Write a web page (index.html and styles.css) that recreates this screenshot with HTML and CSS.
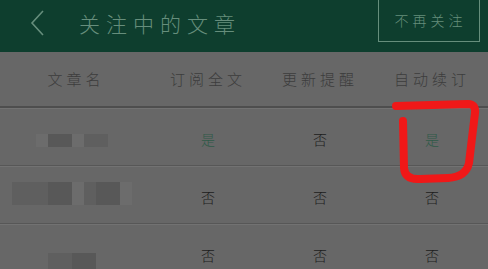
FILE: index.html
```html
<!DOCTYPE html>
<html lang="zh-CN">
<head>
    <meta charset="UTF-8">
    <meta name="viewport" content="width=device-width, initial-scale=1.0">
    <title>关注中的文章</title>
    <link rel="stylesheet" href="styles.css">
</head>
<body>
    <div class="topbar">
        <span class="back">
            <svg width="16" height="28" viewBox="0 0 16 28"><path d="M14 2 L3 14 L14 26" fill="none" stroke="#668e7c" stroke-width="1.6"/></svg>
        </span>
        <span class="title">关注中的文章</span>
        <span class="unfollow">不再关注</span>
    </div>

    <div class="table">
        <div class="row head">
            <div class="cell">文章名</div>
            <div class="cell">订阅全文</div>
            <div class="cell">更新提醒</div>
            <div class="cell">自动续订</div>
        </div>
        <div class="row">
            <div class="cell name">
                <div class="blur b1">
                    <i class="p0"></i><i class="p2"></i><i class="p2"></i><i class="p0"></i><i class="p1"></i><i class="p1"></i>
                </div>
            </div>
            <div class="cell yes">是</div>
            <div class="cell">否</div>
            <div class="cell yes">是</div>
        </div>
        <div class="row">
            <div class="cell name">
                <div class="blur b2">
                    <i class="p1"></i><i class="p1"></i><i class="p1"></i><i class="p2"></i><i class="p2"></i><i class="p0"></i><i class="p1"></i><i class="p2"></i><i class="p2"></i><i class="p0"></i>
                </div>
            </div>
            <div class="cell">否</div>
            <div class="cell">否</div>
            <div class="cell">否</div>
        </div>
        <div class="row">
            <div class="cell name">
                <div class="blur b3">
                    <i class="p1"></i><i class="p1"></i><i class="p2"></i><i class="p2"></i>
                </div>
            </div>
            <div class="cell">否</div>
            <div class="cell">否</div>
            <div class="cell">否</div>
        </div>
    </div>

    <svg class="mark" width="488" height="269" viewBox="0 0 488 269">
        <path d="M396 106 L468 104 Q476 104 475 113 L469 163 Q466 177 448 178 L420 179 Q405 180 404 168 L403 121" fill="none" stroke="#f01818" stroke-width="8" stroke-linecap="round" stroke-linejoin="round"/>
    </svg>
</body>
</html>
```

FILE: styles.css
```css
body {
    margin: 0;
    width: 488px;
    height: 269px;
    overflow: hidden;
    background: #676767;
    font-family: "Noto Sans CJK SC", "Noto Sans", sans-serif;
    font-weight: 300;
    position: relative;
}
.topbar {
    height: 52px;
    background: #0e3e2e;
    display: flex;
    align-items: center;
    color: #668e7c;
}
.back {
    display: flex;
    margin-left: 29px;
    margin-top: -6px;
}
.title {
    margin-left: 34px;
    margin-top: -6px;
    font-size: 21px;
    letter-spacing: 6px;
}
.unfollow {
    margin-left: auto;
    margin-right: 8px;
    align-self: flex-start;
    margin-top: -2px;
    width: 102px;
    height: 44px;
    box-sizing: border-box;
    border: 1px solid #668e7c;
    display: flex;
    align-items: center;
    justify-content: center;
    font-size: 14px;
    letter-spacing: 4px;
    padding-left: 3px;
}
.row {
    display: grid;
    grid-template-columns: 152px 1fr 1fr 1fr;
    height: 57px;
    border-bottom: 1px solid #575757;
    box-shadow: 0 1px 0 #727272;
}
.row.head {
    height: 54px;
    border-bottom: 2px solid #4e4e4e;
}
.cell {
    display: flex;
    align-items: center;
    justify-content: center;
    color: #1c1c1c;
    font-size: 14px;
    padding-top: 4px;
}
.row.head .cell {
    color: #3c3c3c;
    font-size: 15px;
    letter-spacing: 4px;
    padding-top: 0;
    padding-bottom: 2px;
}
.cell.yes {
    color: #2f5a48;
}
.cell.name {
    justify-content: flex-start;
    padding-top: 0;
}
.blur {
    display: flex;
}
.blur i {
    display: block;
    width: 12px;
    height: 13px;
}
.p0 { background: #6c6c6c; }
.p1 { background: #5f5f5f; }
.p2 { background: #585858; }
.b1 {
    margin-left: 36px;
    margin-top: 8px;
}
.b2 {
    margin-left: 12px;
    margin-top: -2px;
}
.b2 i {
    height: 23px;
}
.b3 {
    margin-left: 48px;
    margin-top: 24px;
}
.b3 i {
    height: 24px;
}
.mark {
    position: absolute;
    left: 0;
    top: 0;
}
```
